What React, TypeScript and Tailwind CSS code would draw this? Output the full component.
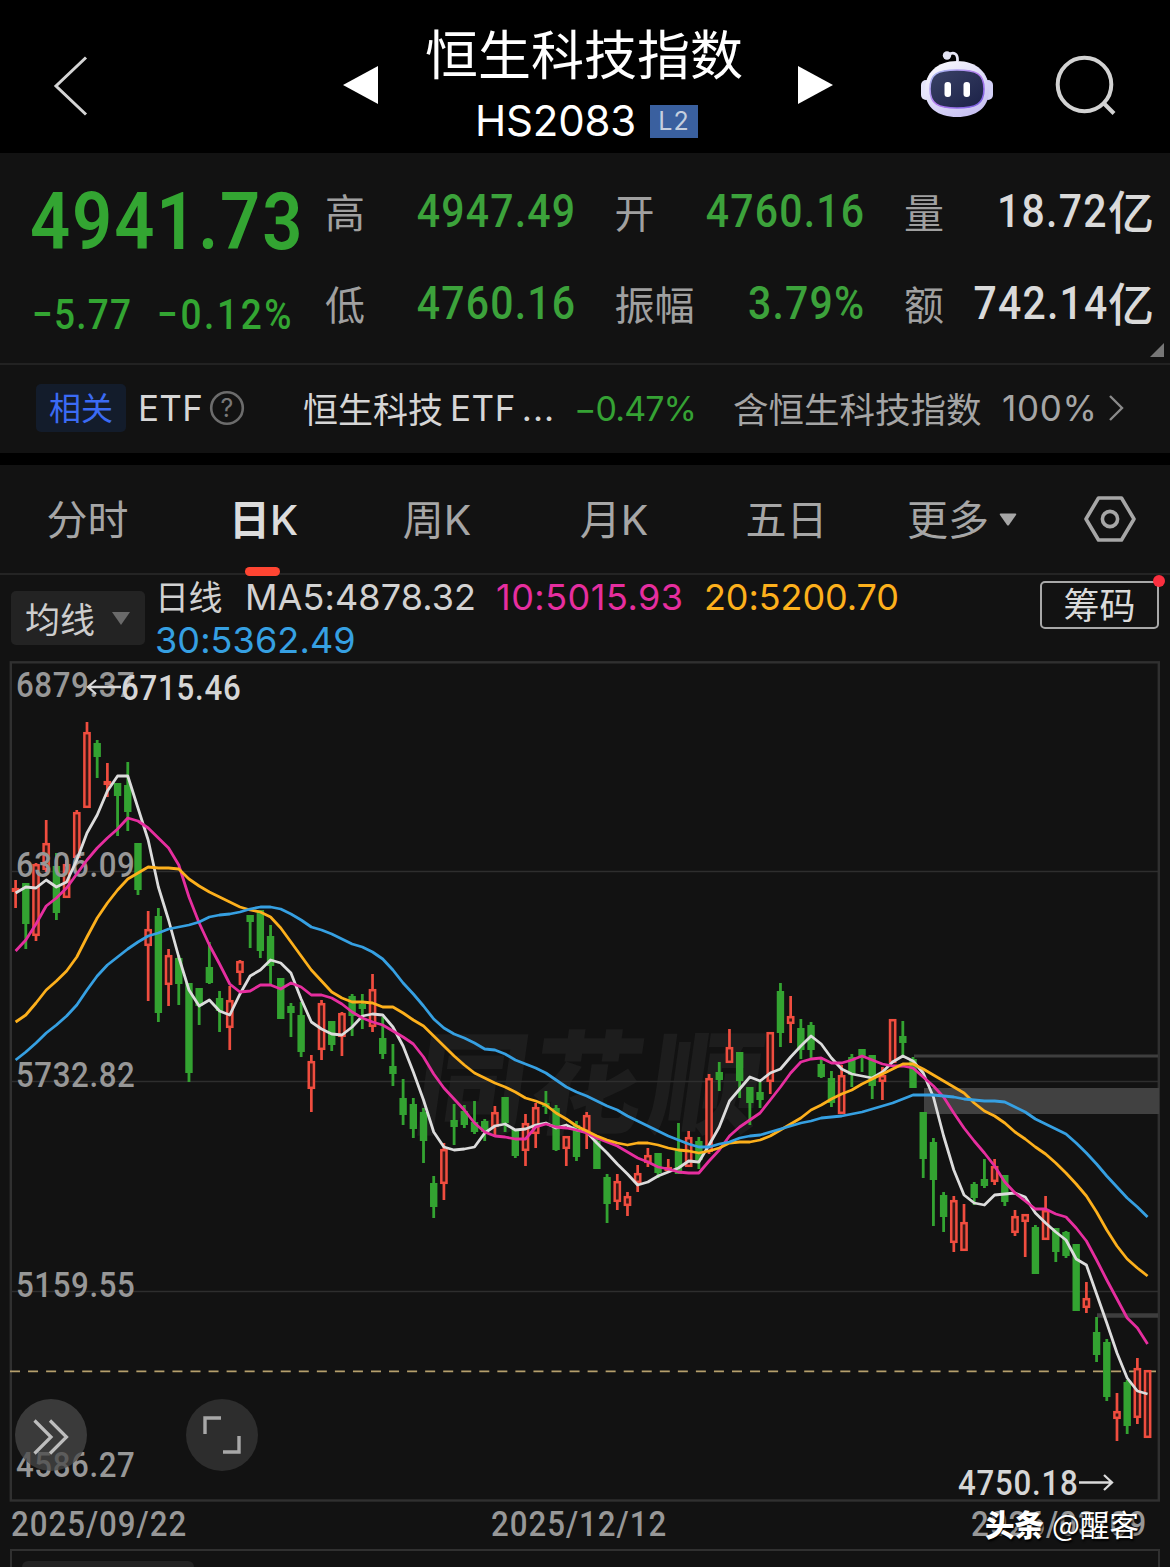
import React from "react";

type Candle = [number, number, number, number, 0 | 1];

const STEP = 10.198;
const X0 = 15.6;

// high, body top, body bottom, low, rising
const candles: Candle[] = [
  [880, 888, 892, 908, 1], [883, 883, 924, 949, 0], [863, 864, 936, 941, 1], [820, 843, 870, 872, 1],
  [853, 866, 913, 920, 0], [860, 864, 898, 898, 1], [810, 812, 858, 858, 1], [722, 732, 808, 808, 1],
  [740, 743, 757, 778, 0], [763, 781, 785, 797, 1], [783, 783, 796, 836, 0], [762, 785, 812, 831, 0],
  [843, 843, 890, 895, 0], [911, 929, 946, 1001, 1], [908, 916, 1013, 1022, 0], [949, 955, 985, 1006, 1],
  [955, 958, 984, 1005, 0], [983, 983, 1073, 1082, 0], [988, 988, 1006, 1025, 0], [942, 967, 983, 984, 0],
  [991, 998, 1011, 1032, 0], [986, 1000, 1028, 1050, 1], [960, 961, 973, 985, 1], [915, 915, 922, 948, 0],
  [910, 910, 951, 958, 0], [925, 936, 966, 984, 0], [978, 978, 1019, 1019, 0], [1003, 1006, 1013, 1037, 0],
  [1002, 1015, 1052, 1057, 0], [1055, 1061, 1089, 1112, 1], [1000, 1003, 1050, 1060, 1], [1021, 1021, 1045, 1051, 0],
  [1012, 1013, 1037, 1056, 1], [994, 996, 1016, 1036, 0], [994, 1004, 1009, 1029, 0], [974, 989, 1027, 1032, 1],
  [1017, 1038, 1054, 1059, 0], [1044, 1066, 1074, 1086, 0], [1079, 1098, 1115, 1125, 0], [1098, 1104, 1129, 1138, 0],
  [1108, 1112, 1141, 1163, 0], [1176, 1183, 1207, 1218, 0], [1143, 1149, 1184, 1200, 1], [1104, 1120, 1127, 1145, 0],
  [1105, 1111, 1125, 1128, 0], [1101, 1122, 1132, 1134, 0], [1119, 1121, 1132, 1141, 0], [1106, 1112, 1127, 1137, 1],
  [1097, 1097, 1123, 1132, 0], [1129, 1129, 1156, 1158, 0], [1114, 1123, 1151, 1166, 1], [1103, 1107, 1134, 1148, 1],
  [1091, 1103, 1107, 1114, 0], [1105, 1108, 1150, 1151, 0], [1136, 1136, 1149, 1166, 1], [1121, 1125, 1157, 1161, 0],
  [1112, 1115, 1132, 1149, 1], [1137, 1141, 1169, 1169, 0], [1174, 1177, 1204, 1223, 0], [1174, 1181, 1202, 1210, 1],
  [1192, 1196, 1206, 1216, 1], [1165, 1173, 1183, 1192, 1], [1148, 1155, 1163, 1167, 1], [1153, 1153, 1173, 1178, 0],
  [1159, 1167, 1171, 1171, 1], [1123, 1150, 1174, 1174, 0], [1131, 1137, 1167, 1167, 1], [1137, 1141, 1160, 1169, 0],
  [1074, 1078, 1152, 1154, 1], [1062, 1072, 1080, 1091, 0], [1029, 1047, 1063, 1063, 1], [1052, 1052, 1081, 1098, 0],
  [1087, 1087, 1103, 1125, 0], [1082, 1092, 1100, 1108, 0], [1032, 1032, 1082, 1094, 1], [983, 991, 1033, 1047, 0],
  [996, 1016, 1024, 1043, 1], [1019, 1028, 1050, 1059, 0], [1022, 1025, 1050, 1058, 0], [1057, 1064, 1077, 1078, 0],
  [1071, 1078, 1103, 1107, 0], [1065, 1075, 1114, 1114, 1], [1054, 1057, 1075, 1087, 0], [1049, 1049, 1057, 1072, 0],
  [1055, 1055, 1086, 1099, 0], [1067, 1075, 1082, 1100, 1], [1019, 1019, 1063, 1063, 1], [1021, 1036, 1043, 1057, 0],
  [1057, 1059, 1088, 1088, 0], [1112, 1112, 1159, 1178, 0], [1138, 1142, 1180, 1226, 0], [1192, 1195, 1217, 1232, 0],
  [1196, 1200, 1243, 1252, 1], [1204, 1222, 1251, 1251, 1], [1182, 1184, 1198, 1205, 0], [1159, 1179, 1186, 1188, 0],
  [1159, 1166, 1182, 1185, 1], [1175, 1175, 1202, 1206, 0], [1210, 1216, 1233, 1236, 1], [1214, 1214, 1222, 1257, 1],
  [1225, 1227, 1274, 1274, 0], [1196, 1210, 1240, 1240, 1], [1228, 1228, 1252, 1262, 0], [1231, 1232, 1256, 1258, 0],
  [1244, 1244, 1311, 1311, 0], [1282, 1298, 1308, 1313, 1], [1317, 1332, 1355, 1362, 0], [1339, 1342, 1397, 1401, 0],
  [1393, 1411, 1419, 1441, 1], [1380, 1382, 1426, 1434, 0], [1358, 1368, 1418, 1424, 1], [1370, 1370, 1438, 1438, 1],
];

const averages: { color: string; ys: number[] }[] = [
  {
    color: "#dcdcdc",
    ys: [893, 887, 888, 880, 887, 882, 860, 833, 815, 791, 776, 776, 808, 840, 887, 920, 957, 990, 1006, 1000, 1011, 1015, 994, 976, 970, 960, 963, 973, 999, 1022, 1029, 1034, 1035, 1027, 1016, 1014, 1015, 1027, 1046, 1072, 1100, 1132, 1147, 1150, 1149, 1147, 1133, 1126, 1124, 1130, 1129, 1125, 1123, 1128, 1125, 1130, 1132, 1143, 1153, 1164, 1174, 1185, 1182, 1176, 1172, 1168, 1161, 1162, 1145, 1127, 1101, 1089, 1077, 1081, 1073, 1069, 1057, 1046, 1036, 1044, 1058, 1069, 1074, 1076, 1078, 1072, 1062, 1056, 1061, 1073, 1097, 1136, 1170, 1195, 1203, 1205, 1195, 1194, 1193, 1197, 1213, 1223, 1232, 1240, 1259, 1265, 1294, 1323, 1353, 1378, 1391, 1394],
  },
  {
    color: "#e62e9f",
    ys: [951, 940, 924, 906, 898, 888, 874, 860, 848, 838, 829, 818, 821, 828, 838, 848, 865, 897, 923, 945, 964, 984, 992, 991, 985, 985, 989, 983, 987, 995, 995, 998, 1004, 1012, 1018, 1022, 1025, 1031, 1037, 1044, 1057, 1074, 1088, 1099, 1110, 1123, 1132, 1136, 1137, 1139, 1139, 1127, 1124, 1127, 1128, 1130, 1133, 1138, 1142, 1146, 1152, 1158, 1162, 1167, 1169, 1172, 1173, 1173, 1161, 1150, 1136, 1127, 1120, 1113, 1100, 1087, 1073, 1062, 1059, 1058, 1063, 1063, 1060, 1056, 1060, 1064, 1066, 1066, 1068, 1077, 1086, 1097, 1113, 1128, 1141, 1153, 1166, 1182, 1193, 1201, 1209, 1209, 1214, 1217, 1228, 1241, 1260, 1280, 1299, 1318, 1328, 1344],
  },
  {
    color: "#fdb01c",
    ys: [1022, 1015, 1003, 990, 981, 971, 957, 937, 918, 903, 890, 879, 873, 867, 868, 868, 869, 879, 886, 892, 897, 902, 907, 910, 912, 917, 928, 942, 956, 970, 981, 992, 998, 1002, 1002, 1003, 1007, 1007, 1013, 1020, 1026, 1036, 1046, 1056, 1065, 1073, 1078, 1083, 1087, 1092, 1098, 1101, 1105, 1113, 1119, 1126, 1131, 1136, 1140, 1143, 1145, 1143, 1143, 1145, 1148, 1150, 1151, 1153, 1151, 1148, 1143, 1142, 1142, 1140, 1136, 1130, 1124, 1118, 1110, 1105, 1099, 1094, 1090, 1084, 1079, 1074, 1069, 1064, 1064, 1069, 1075, 1081, 1087, 1093, 1103, 1111, 1116, 1123, 1132, 1139, 1147, 1154, 1163, 1173, 1184, 1196, 1212, 1230, 1246, 1259, 1268, 1276],
  },
  {
    color: "#36a0e2",
    ys: [1060, 1052, 1043, 1033, 1025, 1016, 1005, 990, 976, 965, 957, 949, 942, 936, 933, 929, 927, 925, 922, 917, 915, 914, 912, 909, 907, 907, 909, 914, 920, 927, 930, 934, 939, 944, 947, 952, 959, 970, 983, 994, 1006, 1019, 1028, 1034, 1038, 1043, 1049, 1050, 1054, 1060, 1064, 1068, 1073, 1080, 1087, 1092, 1096, 1101, 1106, 1110, 1116, 1121, 1126, 1131, 1136, 1140, 1144, 1147, 1147, 1144, 1142, 1138, 1136, 1135, 1132, 1129, 1126, 1123, 1121, 1118, 1117, 1116, 1114, 1112, 1109, 1106, 1103, 1099, 1095, 1095, 1095, 1096, 1097, 1099, 1100, 1101, 1101, 1102, 1107, 1112, 1119, 1124, 1129, 1134, 1143, 1153, 1164, 1176, 1187, 1198, 1207, 1217],
  },
];

const axisLabels: [number, string][] = [
  [697, "6879.37"],
  [877, "6306.09"],
  [1087, "5732.82"],
  [1297, "5159.55"],
  [1477, "4586.27"],
];

const xAt = (i: number) => X0 + STEP * i;

function Chart() {
  return (
    <svg className="block h-[842px] w-[1170px]" viewBox="0 660 1170 842">
      <g
        fill="#1d1d1d"
        fontFamily="'Noto Sans CJK SC', sans-serif"
        fontWeight="900"
        fontSize="112"
        transform="translate(589 1125) skewX(-8)"
        textAnchor="middle"
      >
        <text x="-122">同</text>
        <text x="-7">花</text>
        <text x="112">顺</text>
      </g>
      <path d="M12 871.500H1158M12 1081.500H1158M12 1291.500H1158" stroke="#2e2e2e" strokeWidth="1.500" />
      <rect x="10.800" y="662.300" width="1148" height="838.200" fill="none" stroke="#303030" strokeWidth="2.400" />
      <path d="M914 1056H1158" stroke="#3e3e3e" strokeWidth="3" />
      <rect x="924" y="1088" width="235" height="26" fill="#414141" />
      <path d="M1097 1315.500H1158" stroke="#3e3e3e" strokeWidth="4.500" />
      <path d="M10 1371.300H1156" stroke="#b59f6c" strokeWidth="1.700" strokeDasharray="10 8.050" />

      {candles.map(([h, t, b, l, up], i) => {
        const x = xAt(i);
        return up ? (
          <g key={i} stroke="#f04d3f" strokeWidth="2.700" fill="none">
            <path d={`M${x} ${h}V${t}M${x} ${b}V${l}`} />
            <rect x={x - 2.6} y={t + 1.2} width="5.200" height={Math.max(b - t - 2.4, 1)} strokeWidth="2.500" fill="#3a1815" />
          </g>
        ) : (
          <g key={i} fill="#33a331">
            <rect x={x - 1.4} y={h} width="2.800" height={l - h} />
            <rect x={x - 3.7} y={t} width="7.400" height={b - t} />
          </g>
        );
      })}
      <g fill="#979797" fontFamily="Roboto, sans-serif" fontSize="35.500" fontWeight="500">
        {axisLabels.map(([y, label]) => (
          <text key={y} transform={`translate(16 ${y}) scale(0.88 1)`} textLength="135">
            {label}
          </text>
        ))}
      </g>
      {averages.map((a) => (
        <polyline
          key={a.color}
          points={a.ys.map((y, i) => `${xAt(i)},${y}`).join(" ")}
          fill="none"
          stroke={a.color}
          strokeWidth="2.800"
          strokeLinejoin="round"
        />
      ))}
      <g fill="#d6d6d6" fontFamily="Roboto, sans-serif" fontSize="35.500" fontWeight="500">
        <text transform="translate(121 700) scale(0.88 1)" textLength="136">6715.46</text>
        <text transform="translate(958 1495) scale(0.88 1)" textLength="136">4750.18</text>
      </g>
      <g fill="none" stroke="#dadada" strokeWidth="2.300">
        <path d="M121 687H88M96 680L88 687L96 694" />
        <path d="M1079 1482.500H1112M1104 1475L1112 1482.500L1104 1490" />
      </g>
    </svg>
  );
}

function Robot() {
  return (
    <svg className="h-[70px] w-[76px]" viewBox="0 0 76 70">
      <defs>
        <linearGradient id="shell" x1="0" y1="0" x2="0.6" y2="1">
          <stop offset="0" stopColor="#ffffff" />
          <stop offset="0.6" stopColor="#dcdaf8" />
          <stop offset="1" stopColor="#c9c2f2" />
        </linearGradient>
        <linearGradient id="rim" x1="0" y1="0" x2="1" y2="1">
          <stop offset="0" stopColor="#a9c4f2" />
          <stop offset="0.5" stopColor="#b57cf0" />
          <stop offset="1" stopColor="#6f5be0" />
        </linearGradient>
        <linearGradient id="visor" x1="0" y1="0" x2="1" y2="1">
          <stop offset="0" stopColor="#3a4266" />
          <stop offset="1" stopColor="#1b2147" />
        </linearGradient>
      </defs>
      <path d="M29 7C35 3 39 6 38.500 13" fill="none" stroke="#e6e6f5" strokeWidth="2.800" />
      <circle cx="28" cy="7.500" r="4.200" fill="#e3e3f2" />
      <rect x="2" y="32" width="10" height="20" rx="5" fill="#e4e4fa" />
      <rect x="64" y="32" width="10" height="20" rx="5" fill="#d3d0f6" />
      <path d="M38 13C58 13 70 25 70 42C70 60 57 69 38 69C19 69 6 60 6 42C6 25 18 13 38 13Z" fill="url(#shell)" />
      <path d="M38 22C58 22 65 26 65 41C65 56 57 60 38 60C19 60 11 56 11 41C11 26 18 22 38 22Z" fill="url(#visor)" stroke="url(#rim)" strokeWidth="1.600" />
      <rect x="25.500" y="34" width="6.500" height="15" rx="3" fill="#fff" />
      <rect x="44.500" y="34" width="6.500" height="15" rx="3" fill="#fff" />
    </svg>
  );
}

function Header() {
  return (
    <header className="flex h-[153px] bg-black">
      <svg className="mt-[54px] ml-[50px] h-[64px] w-[40px]" viewBox="0 0 40 64">
        <path d="M36 3.500L6 32L36 60.500" fill="none" stroke="#d4d4d4" strokeWidth="3" />
      </svg>
      <svg className="mt-[65px] ml-[253px] h-[40px] w-[36px]" viewBox="0 0 36 40">
        <path d="M35 1V39L0 20Z" fill="#fff" />
      </svg>
      <div className="flex w-[410px] flex-col items-center">
        <h1 className="mt-[14px] h-[76px] text-[53px] leading-[76px] whitespace-nowrap text-white">恒生科技指数</h1>
        <div className="mt-[5px] ml-[5px] flex items-center">
          <span className="font-['Inter'] text-[42px] leading-[52px] tracking-[-0.200px] text-white">HS2083</span>
          <span className="mt-[1px] ml-[14px] flex h-[33px] w-[48px] items-center justify-center bg-[#3a609f] font-['Inter'] text-[25px] tracking-[1px] text-[#c5cfdf]">
            L2
          </span>
        </div>
      </div>
      <svg className="mt-[65px] ml-[8px] h-[40px] w-[36px]" viewBox="0 0 36 40">
        <path d="M1 1V39L36 20Z" fill="#fff" />
      </svg>
      <div className="mt-[48px] ml-[86px]">
        <Robot />
      </div>
      <svg className="mt-[54px] ml-[58px] h-[64px] w-[64px]" viewBox="0 0 64 64">
        <circle cx="31.500" cy="30.500" r="26.800" fill="none" stroke="#d2d2d2" strokeWidth="4" />
        <path d="M50 48.500L61 59.500" stroke="#d2d2d2" strokeWidth="4" />
      </svg>
    </header>
  );
}

function Stat({ label, value, unit, green }: { label: string; value: string; unit?: string; green?: boolean }) {
  return (
    <div className="flex h-[60px] items-center justify-between whitespace-nowrap">
      <span className="-mt-[6px] text-[40px] text-[#a0a0a0]">{label}</span>
      <span className={green ? "-mr-[1px] flex items-center text-[#3ca23b]" : "flex items-center text-[#dadada]"}>
        <span className="-mt-[5px] inline-block origin-right scale-x-[0.88] font-['Roboto'] text-[46.500px] font-medium tracking-[1.400px]">
          {value}
        </span>
        {unit && <span className="-mt-[10px] text-[46px] font-medium">{unit}</span>}
      </span>
    </div>
  );
}

function Quote() {
  return (
    <section className="relative flex h-[210px] text-[#33a532]">
      <div className="ml-[30px] w-[295px] font-['Roboto'] whitespace-nowrap">
        <div className="mt-[23px] h-[92px] w-[300px] origin-left scale-x-[0.88] text-[80px] leading-[92px] font-semibold tracking-[2.100px]">
          4941.73
        </div>
        <div className="mt-[22px] flex text-[42px] leading-[50px] font-medium">
          <span className="ml-[2px] w-[125px] origin-left scale-x-[0.88] tracking-[1.400px]">−5.77</span>
          <span className="w-[160px] origin-left scale-x-[0.88] tracking-[3px]">−0.12%</span>
        </div>
      </div>
      <div className="mt-[31px] grid h-[152px] grid-cols-[250px_250px_250px] content-between gap-x-[39.500px]">
        <Stat label="高" value="4947.49" green />
        <Stat label="开" value="4760.16" green />
        <Stat label="量" value="18.72" unit="亿" />
        <Stat label="低" value="4760.16" green />
        <Stat label="振幅" value="3.79%" green />
        <Stat label="额" value="742.14" unit="亿" />
      </div>
      <svg className="absolute top-[190px] left-[1150px] h-[14px] w-[14px]" viewBox="0 0 14 14">
        <path d="M14 0V14H0Z" fill="#777" />
      </svg>
    </section>
  );
}

function Related() {
  return (
    <section className="flex h-[90px] items-center border-t-2 border-[#222] pb-[2px] text-[35px] whitespace-nowrap text-[#d6d6d6]">
      <span className="ml-[36px] flex h-[48px] w-[90px] items-center justify-center rounded-[5px] bg-[#131c2b] text-[32px] text-[#3b6bf5]">
        <span className="-mt-[4px]">相关</span>
      </span>
      <span className="ml-[12px] w-[64px] font-['Inter'] text-[35px] tracking-[0.300px]">ETF</span>
      <svg className="ml-[7px] h-[36px] w-[36px]" viewBox="0 0 36 36">
        <circle cx="18" cy="18" r="15.800" fill="none" stroke="#6c6c6c" strokeWidth="2.600" />
        <text x="18" y="27" textAnchor="middle" fontFamily="Inter, sans-serif" fontSize="25" fill="#787878">?</text>
      </svg>
      <span className="ml-[58px] flex w-[271px] items-center">
        <span>恒生科技</span>
        <span className="ml-[7px] font-['Inter'] tracking-[0.500px]">ETF</span>
        <span className="ml-[6px] font-['Inter'] tracking-[1px]">...</span>
      </span>
      <span className="w-[159px] font-['Inter'] text-[34px] tracking-[-0.900px] text-[#35a234]">−0.47%</span>
      <span className="-mt-px w-[269px] text-[35.500px] text-[#a5a5a5]">含恒生科技指数</span>
      <span className="w-[106px] font-['Inter'] text-[35px] tracking-[0.700px] text-[#a5a5a5]">100%</span>
      <svg className="h-[28px] w-[16px]" viewBox="0 0 16 28">
        <path d="M2 2L14 14L2 26" fill="none" stroke="#8a8a8a" strokeWidth="2.400" />
      </svg>
    </section>
  );
}

function Tabs() {
  return (
    <nav className="flex h-[110px] items-center border-b-2 border-[#242424] font-['Inter','Noto_Sans_CJK_SC'] text-[41px] whitespace-nowrap text-[#a6a6a6]">
      <span className="mt-[4px] w-[175px] text-center">分时</span>
      <span className="relative mt-[4px] w-[177px] text-center font-bold text-[#dcdcdc]">
        日<span className="font-medium">K</span>
        <i className="absolute top-[77px] left-[70px] h-[9px] w-[35px] rounded-full bg-[#ff4532]" />
      </span>
      <span className="mt-[4px] w-[170px] text-center">周K</span>
      <span className="mt-[4px] w-[184px] text-center">月K</span>
      <span className="mt-[4px] w-[161px] text-center">五日</span>
      <span className="mt-[4px] ml-[40px] w-[92px]">更多</span>
      <svg className="h-[13px] w-[18px]" viewBox="0 0 18 13">
        <path d="M1.500 0.500H16.500Q18 0.500 17 2L10 12Q9 13 8 12L1 2Q0 0.500 1.500 0.500Z" fill="#a6a6a6" />
      </svg>
      <svg className="ml-[66px] h-[48px] w-[54px]" viewBox="0 0 54 48">
        <path d="M15.500 3H38.500L51 24L38.500 45H15.500L3 24Z" fill="none" stroke="#a6a6a6" strokeWidth="3.600" strokeLinejoin="round" />
        <circle cx="27" cy="24" r="7.600" fill="none" stroke="#a6a6a6" strokeWidth="3.600" />
      </svg>
    </nav>
  );
}

function Legend() {
  return (
    <div className="relative flex h-[85px] whitespace-nowrap">
      <div className="mt-[16px] ml-[11px] flex h-[54px] w-[134px] items-center rounded-[5px] bg-[#232323] pl-[14px] text-[35px] text-[#cdcdcd]">
        均线
        <svg className="ml-[16px] h-[13px] w-[20px]" viewBox="0 0 20 13">
          <path d="M1 0H19L10 13Z" fill="#6a6a6a" />
        </svg>
      </div>
      <div className="ml-[10px] w-[885px] pt-[1px] font-['Inter','Noto_Sans_CJK_SC'] text-[36px] leading-[42px] tracking-[0.100px]">
        <div className="flex">
          <span className="mt-px w-[90px] text-[34px] tracking-[-0.500px] text-[#d2d2d2]">日线</span>
          <span className="w-[251px] text-[#d2d2d2]">MA5:4878.32</span>
          <span className="w-[208px] tracking-[0.500px] text-[#e62e9f]">10:5015.93</span>
          <span className="tracking-[-0.100px] text-[#fdb01c]">20:5200.70</span>
        </div>
        <div className="text-[#36a0e2]">30:5362.49</div>
      </div>
      <button className="relative mt-[6px] h-[48px] w-[119px] rounded-[5px] border-2 border-[#a8a8a8] text-[36px] leading-[40px] text-[#dadada]">
        <span className="relative -top-[2px]">筹码</span>
        <i className="absolute -top-[8px] -right-[8px] h-[12px] w-[12px] rounded-full bg-[#fb2f3f]" />
      </button>
    </div>
  );
}

export default function App() {
  return (
    <main className="h-[1567px] w-[1170px] overflow-hidden bg-[#121212] font-['Noto_Sans_CJK_SC',sans-serif]">
      <Header />
      <Quote />
      <Related />
      <div className="h-[12px] bg-black" />
      <Tabs />
      <Legend />
      <div className="relative">
        <Chart />
        <div className="absolute top-[739px] left-[15px] flex h-[72px] w-[72px] items-center justify-center rounded-full bg-[#484848]/75">
          <svg className="mt-[3px] h-[36px] w-[36px]" viewBox="0 0 36 36">
            <path d="M1.500 1.500L18 18L1.500 34.500M17 1.500L33.500 18L17 34.500" fill="none" stroke="#bdbdbd" strokeWidth="3.200" />
          </svg>
        </div>
        <div className="absolute top-[739px] left-[186px] flex h-[72px] w-[72px] items-center justify-center rounded-full bg-[#2d2d2d]">
          <svg className="h-[38px] w-[38px]" viewBox="0 0 38 38">
            <path d="M2 18V2H18M36 20V36H20" fill="none" stroke="#a8a8a8" strokeWidth="3.400" />
          </svg>
        </div>
      </div>
      <div className="relative flex h-[47px] pl-[11px] font-['Roboto'] text-[35.500px] leading-[45px] font-medium tracking-[1.100px] whitespace-nowrap text-[#979797]">
        <span className="w-[480px] origin-left scale-x-[0.88]">2025/09/22</span>
        <span className="w-[480px] origin-left scale-x-[0.88]">2025/12/12</span>
        <span className="w-[190px] origin-left scale-x-[0.88]">2026/03/09</span>
        <div className="absolute top-[1px] left-[985px] flex gap-[8px] font-['Noto_Sans_CJK_SC'] text-[29.500px] leading-[40px] font-normal tracking-normal whitespace-nowrap text-white [text-shadow:1px_2px_2px_#000]">
          <span className="font-black">头条</span>
          <span>@醒客</span>
        </div>
      </div>
      <div className="mx-[10px] h-[40px] border-2 border-[#303030] pt-[10px] pl-[10px]">
        <div className="h-[40px] w-[172px] rounded-[6px] bg-[#232323]" />
      </div>
    </main>
  );
}
